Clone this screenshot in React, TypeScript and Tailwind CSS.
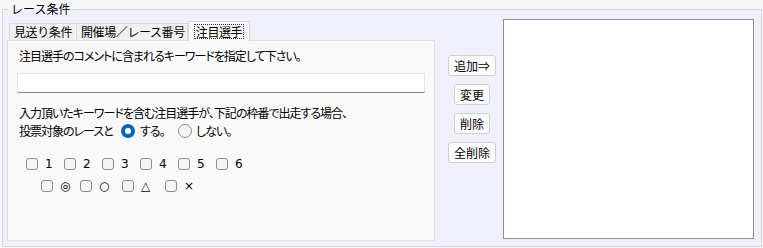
import type { ReactNode } from 'react';

const FONT = "[font-family:'Noto_Sans_CJK_JP','Noto_Sans',sans-serif]";

const NUMBERS = ['1', '2', '3', '4', '5', '6'];
const MARKS = [
  { label: '◎', width: 'w-[39px]' },
  { label: '○', width: 'w-[42px]' },
  { label: '△', width: 'w-[43px]' },
  { label: '×', width: 'w-[40px]' }
];

function Box() {
  return <span className="block h-[12px] w-[12px] shrink-0 rounded-[3px] border border-[#8c8c8c] bg-[#f4f4f4]" />;
}

function CheckItem({ label, className }: { label: string; className: string }) {
  return (
    <label className={`flex items-center gap-[7px] ${className}`}>
      <Box />
      <span className="text-[12px] leading-[14px] tracking-normal [font-family:'DejaVu_Sans',sans-serif] [font-variant-emoji:text]">
        {label}
      </span>
    </label>
  );
}

function Radio({ checked }: { checked?: boolean }) {
  return checked ? (
    <span className="flex h-[14px] w-[14px] shrink-0 items-center justify-center rounded-full bg-[#0067c0]">
      <span className="block h-[6px] w-[6px] rounded-full bg-white" />
    </span>
  ) : (
    <span className="block h-[14px] w-[14px] shrink-0 rounded-full border border-[#8a8a8a] bg-[#f6f6f6]" />
  );
}

function Tab({ children, selected, className }: { children: ReactNode; selected?: boolean; className: string }) {
  if (selected) {
    return (
      <div
        className={`relative z-10 -mb-[1px] flex h-[20px] items-center justify-center border border-b-0 border-[#d6d6d6] bg-[#f9f9f9] ${className}`}
      >
        <span className="border border-dotted border-[#333] px-[1px] leading-[13px]">{children}</span>
      </div>
    );
  }
  return (
    <div className={`flex h-[17px] items-center border border-b-0 border-[#d9d9d9] bg-[#f0f0f0] pl-[4px] ${className}`}>
      {children}
    </div>
  );
}

function SideButton({ children, wide }: { children: ReactNode; wide?: boolean }) {
  return (
    <button
      className={`flex h-[21px] items-center justify-center rounded-[3px] border border-[#cfcfcf] bg-[#fdfdfd] text-[12px] leading-[14px] ${wide ? 'w-[48px]' : 'w-[36px]'}`}
    >
      {children}
    </button>
  );
}

export default function App() {
  return (
    <div className={`h-[248px] w-[763px] bg-[#f7f7f8] pl-[2px] pr-[1px] text-black ${FONT}`}>
      <fieldset className="h-[247px] border border-[#d6d6de] bg-[#f0f0fc]">
        <legend className="ml-[5px] px-[3px] text-[12px] leading-[18px]">レース条件</legend>
        <div className="flex pl-[4px]">
          <div className="flex w-[428px] flex-col pt-[3px]">
            <div className="flex h-[19px] items-end whitespace-nowrap pl-[2px] text-[12px] tracking-[-0.4px]">
              <Tab className="w-[68px]">見送り条件</Tab>
              <Tab className="w-[111px] border-l-0">開催場／レース番号</Tab>
              <Tab selected className="w-[62px]">
                注目選手
              </Tab>
            </div>
            <div className="flex h-[201px] flex-col whitespace-nowrap border border-[#dedede] bg-[#f9f9f9] pl-[11px] text-[12px] tracking-[-1px] [font-feature-settings:'palt']">
              <p className="mt-[7px] leading-[16px]">注目選手のコメントに含まれるキーワードを指定して下さい。</p>
              <input
                className="mt-[9px] h-[20px] w-[408px] -ml-[2px] border border-[#e2e2e2] border-b-[#868686] bg-white outline-none"
                type="text"
              />
              <p className="mt-[11px] leading-[18px]">入力頂いたキーワードを含む注目選手が、下記の枠番で出走する場合、</p>
              <div className="flex h-[18px] items-center">
                <span className="w-[102px]">投票対象のレースと</span>
                <Radio checked />
                <span className="ml-[5px] w-[38px]">する。</span>
                <Radio />
                <span className="ml-[4px]">しない。</span>
              </div>
              <div className="mt-[13px] flex h-[22px] items-center pl-[7px]">
                {NUMBERS.map((n) => (
                  <CheckItem key={n} label={n} className="w-[38px]" />
                ))}
              </div>
              <div className="flex h-[22px] items-center pl-[22px]">
                {MARKS.map((m) => (
                  <CheckItem key={m.label} label={m.label} className={m.width} />
                ))}
              </div>
            </div>
          </div>
          <div className="flex w-[68px] flex-col items-center gap-[8px] pl-[13px] pr-[7px] pt-[37px]">
            <SideButton wide>追加⇒</SideButton>
            <SideButton>変更</SideButton>
            <SideButton>削除</SideButton>
            <SideButton wide>全削除</SideButton>
          </div>
          <div className="mt-[1px] h-[220px] w-[251px] border border-[#8b8b9b] bg-white" />
        </div>
      </fieldset>
    </div>
  );
}
